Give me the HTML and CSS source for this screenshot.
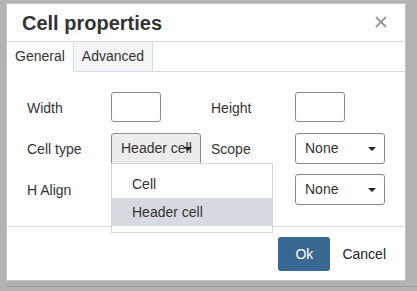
FILE: index.html
```html
<!DOCTYPE html>
<html lang="en">
<head>
    <meta charset="UTF-8">
    <title>Cell properties</title>
    <link rel="stylesheet" href="styles.css">
</head>
<body>

<div class="dialog">
    <div class="dialog-head">
        <h1>Cell properties</h1>
        <span class="close">
            <svg width="12" height="12" viewBox="0 0 12 12"><path d="M1 1L11 11M11 1L1 11" stroke="#9a9a9a" stroke-width="2"/></svg>
        </span>
    </div>

    <div class="tabs">
        <span class="tab active">General</span>
        <span class="tab">Advanced</span>
    </div>

    <div class="dialog-body">
        <div class="form-grid">
            <label>Width</label>
            <div><input class="text-box" type="text"></div>
            <label>Height</label>
            <div><input class="text-box" type="text"></div>

            <label>Cell type</label>
            <div class="select open">Header cell<span class="caret"></span></div>
            <label>Scope</label>
            <div class="select">None<span class="caret"></span></div>

            <label>H Align</label>
            <div></div>
            <label></label>
            <div class="select">None<span class="caret"></span></div>
        </div>

        <!-- lista abierta del select -->
        <ul class="menu">
            <li>Cell</li>
            <li class="selected">Header cell</li>
        </ul>
    </div>

    <div class="dialog-foot">
        <button class="btn-ok">Ok</button>
        <button class="btn-cancel">Cancel</button>
    </div>
</div>

<div class="status-bar"></div>

</body>
</html>
```

FILE: styles.css
```css
/* Estilos generales */
body {
    margin: 0;
    padding: 3px 0 0 6px;
    background-color: #b3b3b3;
    font-family: "Liberation Sans", Arial, sans-serif;
    font-size: 14px;
    color: #333;
}

.dialog {
    width: 398px;
    height: 276px;
    background-color: #fff;
    border: 1px solid #c4c4c4;
    display: flex;
    flex-direction: column;
}

.dialog-head {
    height: 37px;
    border-bottom: 1px solid #d6dbe1;
    display: flex;
    align-items: center;
    justify-content: space-between;
    padding: 0 18px 0 15px;
}

.dialog-head h1 {
    margin: 0;
    font-size: 20px;
    line-height: 24px;
    font-weight: bold;
    color: #333;
}

.close {
    display: flex;
    margin-top: -2px;
}

.tabs {
    display: flex;
    height: 29px;
    border-bottom: 1px solid #d6dbe1;
}

.tab {
    padding: 0 8px;
    line-height: 29px;
    border-right: 1px solid #d6dbe1;
    background-color: #f3f5f7;
    color: #333;
}

.tab.active {
    background-color: #fff;
    height: 30px;
}

.dialog-body {
    position: relative;
    flex: 1;
    padding: 20px 20px 0;
}

.form-grid {
    display: grid;
    grid-template-columns: 84px 100px 84px 90px;
    grid-auto-rows: 31px;
    row-gap: 10px;
    align-items: center;
}

.form-grid label {
    color: #333;
}

.text-box {
    display: block;
    box-sizing: border-box;
    width: 50px;
    height: 30px;
    margin: 0;
    border: 1px solid #8c8c8c;
    border-radius: 3px;
    margin-top: -1px;
}

.select {
    position: relative;
    box-sizing: border-box;
    height: 31px;
    width: 90px;
    line-height: 29px;
    padding-left: 9px;
    border: 1px solid #8c8c8c;
    border-radius: 3px;
    background-color: #fff;
    white-space: nowrap;
    overflow: hidden;
}

.select.open {
    background-color: #ececec;
    border-bottom-left-radius: 0;
    border-bottom-right-radius: 0;
}

.caret {
    position: absolute;
    right: 8px;
    top: 13px;
    width: 0;
    height: 0;
    border-left: 4px solid transparent;
    border-right: 4px solid transparent;
    border-top: 4px solid #222;
}

.menu {
    position: absolute;
    left: 104px;
    top: 91px;
    width: 160px;
    margin: 0;
    padding: 6px 0;
    list-style: none;
    background-color: #fff;
    border: 1px solid #d3d7dd;
    z-index: 2;
}

.menu li {
    height: 28px;
    line-height: 28px;
    padding-left: 20px;
    color: #333;
}

.menu li.selected {
    background-color: #d6dbe1;
}

.dialog-foot {
    height: 53px;
    border-top: 1px solid #d6dbe1;
    display: flex;
    align-items: center;
    justify-content: flex-end;
    padding: 0 7px 0 0;
}

.dialog-foot button {
    font-family: "Liberation Sans", Arial, sans-serif;
    font-size: 14px;
    height: 34px;
    border: none;
    cursor: pointer;
}

.btn-ok {
    width: 52px;
    background-color: #396892;
    color: #fff;
    border-radius: 3px;
}

.btn-cancel {
    padding: 0 12px;
    background: none;
    color: #222;
}

.status-bar {
    margin-top: 5px;
    border-top: 1px solid #9d9d9d;
}
```
